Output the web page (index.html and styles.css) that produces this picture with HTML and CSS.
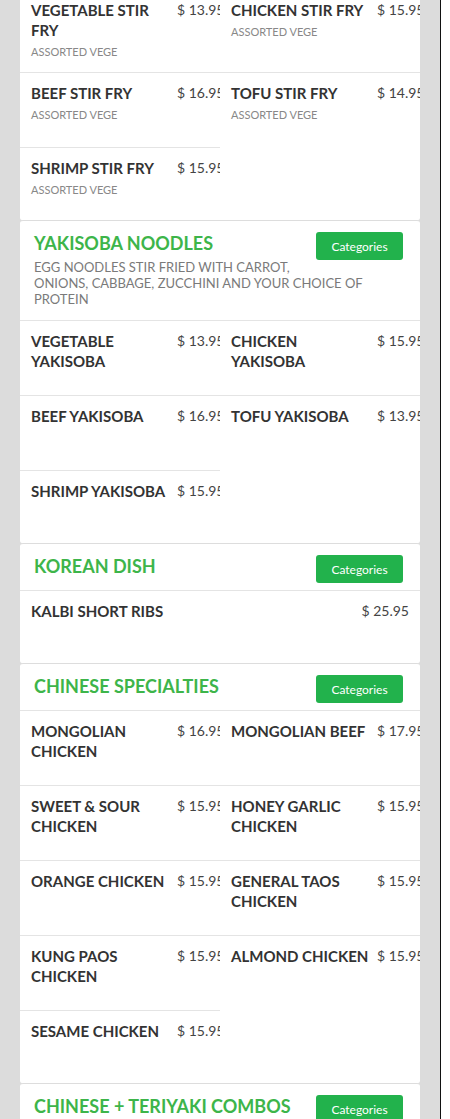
FILE: index.html
```html
<!DOCTYPE html>
<html lang="en">
<head>
<meta charset="utf-8">
<title>Menu</title>
<link rel="stylesheet" href="styles.css">
</head>
<body>
<div class="frame">
  <main class="menu">
    <section class="cat cat-cont">
      <div class="items">
        <div class="item"><div class="name"><div class="title">VEGETABLE STIR FRY</div><div class="desc">ASSORTED VEGE</div></div><div class="price">$ 13.95</div></div>
        <div class="item"><div class="name"><div class="title">CHICKEN STIR FRY</div><div class="desc">ASSORTED VEGE</div></div><div class="price">$ 15.95</div></div>
        <div class="item"><div class="name"><div class="title">BEEF STIR FRY</div><div class="desc">ASSORTED VEGE</div></div><div class="price">$ 16.95</div></div>
        <div class="item"><div class="name"><div class="title">TOFU STIR FRY</div><div class="desc">ASSORTED VEGE</div></div><div class="price">$ 14.95</div></div>
        <div class="item"><div class="name"><div class="title">SHRIMP STIR FRY</div><div class="desc">ASSORTED VEGE</div></div><div class="price">$ 15.95</div></div>
      </div>
    </section>

    <section class="cat">
      <header class="cat-head">
        <div class="cat-row"><h2 class="cat-title">YAKISOBA NOODLES</h2><button class="btn" type="button">Categories</button></div>
        <p class="cat-desc">EGG NOODLES STIR FRIED WITH CARROT,<br>ONIONS, CABBAGE, ZUCCHINI AND YOUR CHOICE OF PROTEIN</p>
      </header>
      <div class="items">
        <div class="item"><div class="name"><div class="title">VEGETABLE YAKISOBA</div></div><div class="price">$ 13.95</div></div>
        <div class="item"><div class="name"><div class="title">CHICKEN YAKISOBA</div></div><div class="price">$ 15.95</div></div>
        <div class="item"><div class="name"><div class="title">BEEF YAKISOBA</div></div><div class="price">$ 16.95</div></div>
        <div class="item"><div class="name"><div class="title">TOFU YAKISOBA</div></div><div class="price">$ 13.95</div></div>
        <div class="item"><div class="name"><div class="title">SHRIMP YAKISOBA</div></div><div class="price">$ 15.95</div></div>
      </div>
    </section>

    <section class="cat">
      <header class="cat-head">
        <div class="cat-row"><h2 class="cat-title">KOREAN DISH</h2><button class="btn" type="button">Categories</button></div>
      </header>
      <div class="items items-one">
        <div class="item"><div class="name"><div class="title">KALBI SHORT RIBS</div></div><div class="price">$ 25.95</div></div>
      </div>
    </section>

    <section class="cat">
      <header class="cat-head">
        <div class="cat-row"><h2 class="cat-title">CHINESE SPECIALTIES</h2><button class="btn" type="button">Categories</button></div>
      </header>
      <div class="items">
        <div class="item"><div class="name"><div class="title">MONGOLIAN CHICKEN</div></div><div class="price">$ 16.95</div></div>
        <div class="item"><div class="name"><div class="title">MONGOLIAN BEEF</div></div><div class="price">$ 17.95</div></div>
        <div class="item"><div class="name"><div class="title">SWEET &amp; SOUR CHICKEN</div></div><div class="price">$ 15.95</div></div>
        <div class="item"><div class="name"><div class="title">HONEY GARLIC CHICKEN</div></div><div class="price">$ 15.95</div></div>
        <div class="item"><div class="name"><div class="title">ORANGE CHICKEN</div></div><div class="price">$ 15.95</div></div>
        <div class="item"><div class="name"><div class="title">GENERAL TAOS CHICKEN</div></div><div class="price">$ 15.95</div></div>
        <div class="item"><div class="name"><div class="title">KUNG PAOS CHICKEN</div></div><div class="price">$ 15.95</div></div>
        <div class="item"><div class="name"><div class="title">ALMOND CHICKEN</div></div><div class="price">$ 15.95</div></div>
        <div class="item"><div class="name"><div class="title">SESAME CHICKEN</div></div><div class="price">$ 15.95</div></div>
      </div>
    </section>

    <section class="cat">
      <header class="cat-head">
        <div class="cat-row"><h2 class="cat-title">CHINESE + TERIYAKI COMBOS</h2><button class="btn" type="button">Categories</button></div>
      </header>
    </section>
  </main>
</div>
</body>
</html>
```
FILE: styles.css
```css
* { box-sizing: border-box; }

html, body {
  margin: 0;
  padding: 0;
  background: #ffffff;
}

body {
  font-family: "Lato", "Liberation Sans", sans-serif;
  color: #333333;
}

.frame {
  width: 441px;
  min-height: 100vh;
  padding: 0 21px 0 20px;
  background: #dcdcdc;
  border-right: 1px solid #111111;
  overflow: hidden;
}

.menu {
  width: 400px;
}

.cat {
  background: #ffffff;
  border-top: 1px solid #dddddd;
  border-bottom: 1px solid #dddddd;
  border-radius: 3px;
  margin-top: -1px;
  overflow: hidden;
}

.cat-cont {
  margin-top: 0;
  border-top: 0;
  border-radius: 0 0 3px 3px;
}

.cat-head {
  padding: 11px 17px 7px 14px;
}

.cat-row {
  display: flex;
  align-items: flex-start;
  justify-content: space-between;
  gap: 10px;
}

.cat-title {
  margin: 0;
  font-size: 18px;
  line-height: 22px;
  font-weight: 700;
  color: #3db54a;
}

.btn {
  flex: none;
  width: 87px;
  height: 28px;
  border: 0;
  border-radius: 3px;
  background: #22b24c;
  color: #ffffff;
  font-family: "Lato", "Liberation Sans", sans-serif;
  font-size: 12px;
  padding: 0;
}

.cat-desc {
  margin: -1px 0 6px;
  font-size: 13px;
  line-height: 16px;
  color: #7a7a7a;
}

.items {
  display: grid;
  grid-template-columns: 1fr 1fr;
}

.items-one {
  grid-template-columns: 1fr;
}

.item {
  display: flex;
  align-items: flex-start;
  min-height: 75px;
  padding: 10px 11px 12px 11px;
  border-top: 1px solid #e4e4e4;
  overflow: hidden;
}

.item:last-child {
  min-height: 73px;
}

.cat-cont .item:nth-child(-n+2) {
  border-top: 0;
  padding-top: 0;
  min-height: 0;
}

.name {
  flex: 0 0 82%;
  padding-right: 6px;
}

.title {
  font-size: 15px;
  line-height: 20px;
  font-weight: 700;
  color: #333333;
}

.desc {
  margin-top: 4px;
  font-size: 11px;
  line-height: 16px;
  color: #888888;
}

.price {
  flex: 1 1 auto;
  min-width: 0;
  text-align: right;
  white-space: nowrap;
  font-size: 14px;
  line-height: 20px;
  color: #444444;
}
```
